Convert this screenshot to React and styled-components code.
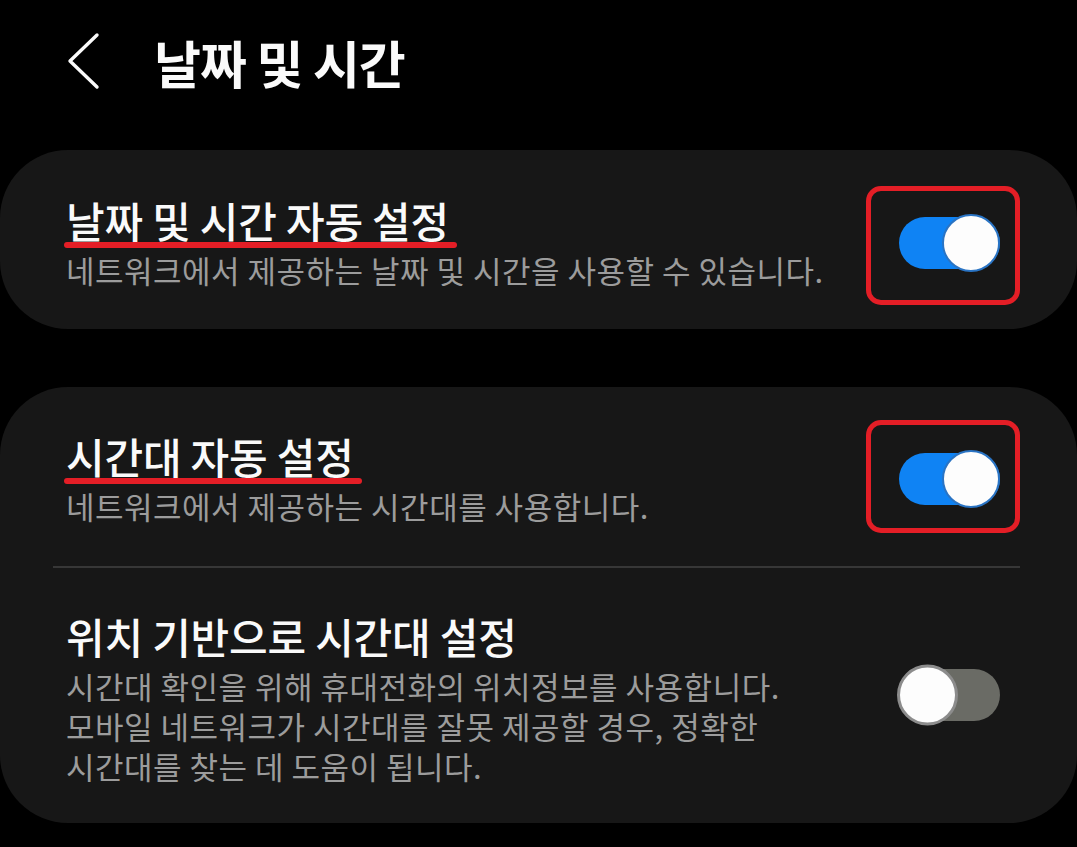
import React from "react";
import styled, { createGlobalStyle } from "styled-components";

const Global = createGlobalStyle`
  html, body { margin: 0; padding: 0; background: #000; }
  body {
    font-family: "Noto Sans CJK KR", "Noto Sans", sans-serif;
    color: #fafafa;
    -webkit-font-smoothing: antialiased;
  }
`;

const Screen = styled.div`
  width: 1077px;
  height: 847px;
  background: #000;
  overflow: hidden;
`;

const Header = styled.header`
  height: 124px;
  display: flex;
  align-items: center;
  padding-left: 66px;
  gap: 52px;
  margin-bottom: 26px;
`;

const BackButton = styled.button`
  background: none;
  border: 0;
  padding: 0;
  width: 36px;
  height: 60px;
  display: flex;
  align-items: center;
  justify-content: center;
  margin-top: -4px;
`;

const PageTitle = styled.h1`
  margin: 0;
  font-size: 51px;
  font-weight: 700;
  letter-spacing: -1px;
  line-height: 64px;
  color: #fafafa;
`;

const Card = styled.section`
  background: #171717;
  border-radius: 68px;
  padding: 0 77px 0 66px;
  margin-bottom: ${(p) => p.$gap || 0}px;
`;

const Row = styled.div`
  display: flex;
  align-items: center;
  justify-content: space-between;
  padding: ${(p) => p.$top}px 0 ${(p) => p.$bottom}px;
`;

const TextBlock = styled.div`
  display: flex;
  flex-direction: column;
`;

const Title = styled.div`
  font-size: 42px;
  font-weight: 500;
  letter-spacing: -0.2px;
  line-height: 50px;
  color: #fafafa;
`;

const Marked = styled.span`
  position: relative;
  display: inline-block;
`;

const Underline = styled.span`
  position: absolute;
  left: -2px;
  right: -8px;
  bottom: -3px;
  height: 6px;
  border-radius: 3px;
  background: #e41e26;
`;

const Sub = styled.div`
  margin-top: 5px;
  font-size: 31px;
  font-weight: 400;
  letter-spacing: 0.5px;
  line-height: 40px;
  color: #9c9c9c;
`;

const Divider = styled.hr`
  border: 0;
  height: 2px;
  background: #373737;
  margin: 0 -20px 0 -13px;
`;

const SwitchWrap = styled.div`
  position: relative;
  width: 101px;
  height: 52px;
  flex: none;
  margin-bottom: ${(p) => p.$lift || 0}px;
`;

const Track = styled.div`
  width: 101px;
  height: 52px;
  border-radius: 26px;
  background: ${(p) => (p.$on ? "#0f83f4" : "#6a6b65")};
`;

const Thumb = styled.div`
  position: absolute;
  top: 50%;
  width: ${(p) => (p.$on ? 58 : 61)}px;
  height: ${(p) => (p.$on ? 58 : 61)}px;
  box-sizing: border-box;
  border-radius: 50%;
  background: #fdfdfd;
  border: ${(p) => (p.$on ? "2.5px solid #2a74c4" : "3.5px solid #8c8c8c")};
  transform: translateY(-50%);
  ${(p) => (p.$on ? "right: 0;" : "left: -2px;")}
`;

const RedBox = styled.span`
  position: absolute;
  left: -33px;
  right: -20px;
  top: ${(p) => p.$top}px;
  bottom: ${(p) => p.$bottom}px;
  border: 5px solid #e41e26;
  border-radius: 15px;
  pointer-events: none;
`;

function Switch({ on, box, lift }) {
  return (
    <SwitchWrap $lift={lift}>
      <Track $on={on} />
      <Thumb $on={on} />
      {box && <RedBox $top={box[0]} $bottom={box[1]} />}
    </SwitchWrap>
  );
}

function Chevron() {
  return (
    <svg width="36" height="60" viewBox="0 0 36 60" fill="none">
      <polyline
        points="31,5 4,31 31,57"
        stroke="#fafafa"
        strokeWidth="3.4"
        strokeLinecap="round"
        strokeLinejoin="round"
      />
    </svg>
  );
}

export default function App() {
  return (
    <Screen>
      <Global />
      <Header>
        <BackButton aria-label="뒤로">
          <Chevron />
        </BackButton>
        <PageTitle>날짜 및 시간</PageTitle>
      </Header>

      <Card $gap={58}>
        <Row $top={45} $bottom={39}>
          <TextBlock>
            <Title>
              <Marked>
                날짜 및 시간 자동 설정
                <Underline />
              </Marked>
            </Title>
            <Sub>네트워크에서 제공하는 날짜 및 시간을 사용할 수 있습니다.</Sub>
          </TextBlock>
          <Switch on box={[-31, -36]} />
        </Row>
      </Card>

      <Card>
        <Row $top={44} $bottom={40}>
          <TextBlock>
            <Title>
              <Marked>
                시간대 자동 설정
                <Underline />
              </Marked>
            </Title>
            <Sub>네트워크에서 제공하는 시간대를 사용합니다.</Sub>
          </TextBlock>
          <Switch on box={[-33, -28]} />
        </Row>
        <Divider />
        <Row $top={43} $bottom={37}>
          <TextBlock>
            <Title>위치 기반으로 시간대 설정</Title>
            <Sub>
              시간대 확인을 위해 휴대전화의 위치정보를 사용합니다.
              <br />
              모바일 네트워크가 시간대를 잘못 제공할 경우, 정확한
              <br />
              시간대를 찾는 데 도움이 됩니다.
            </Sub>
          </TextBlock>
          <Switch on={false} lift={8} />
        </Row>
      </Card>
    </Screen>
  );
}
